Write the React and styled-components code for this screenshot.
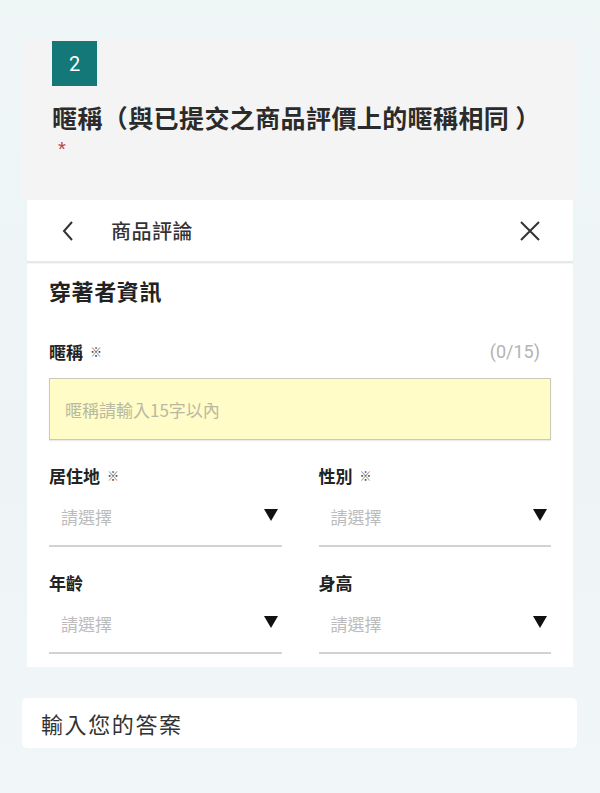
import React from 'react';
import styled, { createGlobalStyle } from 'styled-components';

const GlobalStyle = createGlobalStyle`
  html, body {
    margin: 0;
    padding: 0;
    background: #eef5f6;
  }
  body {
    font-family: "Noto Sans CJK TC", "Noto Sans", sans-serif;
    color: #333;
  }
`

const Page = styled.div`
  width: 600px;
  height: 793px;
  box-sizing: border-box;
  padding: 40px 23px 0 22px;
  background: linear-gradient(180deg, #eff6f6 0%, #eef4f6 60%, #f1f6f8 100%);
  overflow: hidden;
`

const QuestionCard = styled.div`
  background: #f4f4f4;
  height: 160px;
  box-sizing: border-box;
  padding: 1px 30px 0 30px;
`

const Badge = styled.div`
  width: 45px;
  height: 45px;
  background: #137877;
  color: #fff;
  font-family: "Roboto", "Noto Sans", sans-serif;
  font-size: 20px;
  display: flex;
  align-items: center;
  justify-content: center;
`

const QuestionTitle = styled.h2`
  margin: 15px 0 0;
  font-size: 25px;
  line-height: 32px;
  font-weight: 700;
  letter-spacing: 0.4px;
  color: #2b2b2b;
  white-space: nowrap;
`

const Required = styled.div`
  font-family: "Liberation Sans", Arial, sans-serif;
  color: #c43a3a;
  font-size: 20px;
  line-height: 20px;
  margin-left: 6px;
  margin-top: 6px;
`

const Panel = styled.div`
  background: #fff;
  margin: 0 4px 0 5px;
  padding-bottom: 13px;
`

const PanelHeader = styled.div`
  height: 61px;
  display: flex;
  align-items: center;
  padding: 0 33px 0 35px;
  border-bottom: 2px solid #e8e8e8;
  box-shadow: 0 1px 1px rgba(0, 0, 0, 0.04);
`

const HeaderTitle = styled.div`
  flex: 1;
  margin-left: 37px;
  font-size: 20px;
  font-weight: 500;
  color: #333;
  letter-spacing: 0.5px;
`

const PanelBody = styled.div`
  padding: 13px 22px 0;
`

const SectionTitle = styled.div`
  font-size: 22px;
  font-weight: 700;
  line-height: 28px;
  color: #222;
  letter-spacing: 0.6px;
`

const LabelRow = styled.div`
  display: flex;
  justify-content: space-between;
  align-items: center;
  margin-top: ${p => p.$top || 0}px;
  height: 24px;
`

const Label = styled.div`
  height: 24px;
  font-size: 17px;
  font-weight: 700;
  color: #222;
  display: flex;
  align-items: center;
`

const Mark = styled.span`
  font-size: 12px;
  color: #444;
  margin-left: 7px;
  font-weight: 700;
`

const Counter = styled.span`
  font-family: "Roboto", "Noto Sans", sans-serif;
  font-size: 18px;
  color: #b3b3b3;
  margin-right: 11px;
`

const YellowInput = styled.div`
  margin-top: 15px;
  height: 62px;
  box-sizing: border-box;
  background: #fffcc8;
  border: 1px solid #c9c9b8;
  box-shadow: 0 1px 1px rgba(0, 0, 0, 0.08);
  display: flex;
  align-items: center;
  padding-left: 15px;
  font-size: 17px;
  color: #b9b8a0;
`

const FieldGrid = styled.div`
  display: grid;
  grid-template-columns: 1fr 1fr;
  column-gap: 37px;
  row-gap: 23px;
  margin-top: 23px;
`

const Field = styled.div`
  display: flex;
  flex-direction: column;
`

const Select = styled.div`
  height: 60px;
  box-sizing: border-box;
  border-bottom: 2px solid #d2d2d2;
  display: flex;
  align-items: center;
  justify-content: space-between;
  padding: 0 4px 0 12px;
  font-size: 17px;
  color: #bcbcbc;
`

const Caret = styled.span`
  width: 0;
  height: 0;
  border-left: 7px solid transparent;
  border-right: 7px solid transparent;
  border-top: 12px solid #111;
  margin-top: -2px;
`

const AnswerBox = styled.div`
  margin-top: 31px;
  height: 50px;
  background: #fff;
  border-radius: 5px;
  display: flex;
  align-items: center;
  padding-left: 19px;
  font-size: 22px;
  color: #333;
  letter-spacing: 1.6px;
`

const fields = [
  { label: '居住地', required: true },
  { label: '性別', required: true },
  { label: '年齡' },
  { label: '身高' },
];

function Chevron() {
  return (
    <svg width="12" height="20" viewBox="0 0 12 20">
      <path d="M10 1 L2 10 L10 19" fill="none" stroke="#333" strokeWidth="2" />
    </svg>
  );
}

function Close() {
  return (
    <svg width="20" height="20" viewBox="0 0 20 20">
      <path d="M1 1 L19 19 M19 1 L1 19" fill="none" stroke="#333" strokeWidth="2" />
    </svg>
  );
}

export default function App() {
  return (
    <Page>
      <GlobalStyle />
      <QuestionCard>
        <Badge>2</Badge>
        <QuestionTitle>暱稱（與已提交之商品評價上的暱稱相同 ）</QuestionTitle>
        <Required>*</Required>
      </QuestionCard>
      <Panel>
        <PanelHeader>
          <Chevron />
          <HeaderTitle>商品評論</HeaderTitle>
          <Close />
        </PanelHeader>
        <PanelBody>
          <SectionTitle>穿著者資訊</SectionTitle>
          <LabelRow $top={35}>
            <Label>暱稱<Mark>※</Mark></Label>
            <Counter>(0/15)</Counter>
          </LabelRow>
          <YellowInput>暱稱請輸入15字以內</YellowInput>
          <FieldGrid>
            {fields.map(f => (
              <Field key={f.label}>
                <Label>{f.label}{f.required && <Mark>※</Mark>}</Label>
                <Select>
                  請選擇
                  <Caret />
                </Select>
              </Field>
            ))}
          </FieldGrid>
        </PanelBody>
      </Panel>
      <AnswerBox>輸入您的答案</AnswerBox>
    </Page>
  );
}
